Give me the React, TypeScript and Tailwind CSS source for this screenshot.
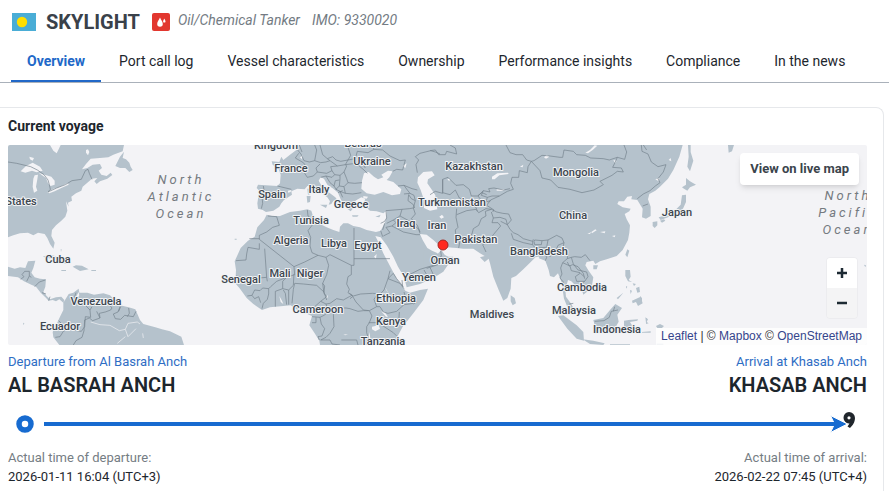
import React, { useState } from 'react';

type Label = { text: string; x: number; y: number };

const TABS = [
  'Overview',
  'Port call log',
  'Vessel characteristics',
  'Ownership',
  'Performance insights',
  'Compliance',
  'In the news',
];

const COUNTRIES: Label[] = [
  { text: 'States', x: 13, y: 60 },
  { text: 'Cuba', x: 50, y: 118 },
  { text: 'Venezuela', x: 88, y: 160 },
  { text: 'Ecuador', x: 52, y: 185 },
  { text: 'Kingdom', x: 268, y: 4 },
  { text: 'Belarus', x: 355, y: 2 },
  { text: 'Ukraine', x: 364, y: 20 },
  { text: 'France', x: 283, y: 27 },
  { text: 'Spain', x: 264, y: 53 },
  { text: 'Italy', x: 311, y: 48 },
  { text: 'Greece', x: 343, y: 63 },
  { text: 'Tunisia', x: 303, y: 79 },
  { text: 'Algeria', x: 283, y: 99 },
  { text: 'Libya', x: 326, y: 102 },
  { text: 'Egypt', x: 360, y: 104 },
  { text: 'Iraq', x: 398, y: 82 },
  { text: 'Iran', x: 429, y: 84 },
  { text: 'Mali', x: 272, y: 132 },
  { text: 'Niger', x: 302, y: 132 },
  { text: 'Senegal', x: 233, y: 138 },
  { text: 'Yemen', x: 411, y: 136 },
  { text: 'Ethiopia', x: 388, y: 157 },
  { text: 'Cameroon', x: 310, y: 168 },
  { text: 'Kenya', x: 383, y: 180 },
  { text: 'Tanzania', x: 375, y: 200 },
  { text: 'Kazakhstan', x: 466, y: 25 },
  { text: 'Turkmenistan', x: 444, y: 61 },
  { text: 'Pakistan', x: 468, y: 98 },
  { text: 'Oman', x: 437, y: 119 },
  { text: 'Mongolia', x: 568, y: 31 },
  { text: 'China', x: 565, y: 74 },
  { text: 'Bangladesh', x: 531, y: 110 },
  { text: 'Cambodia', x: 574, y: 146 },
  { text: 'Malaysia', x: 566, y: 169 },
  { text: 'Maldives', x: 484, y: 173 },
  { text: 'Indonesia', x: 609, y: 188 },
  { text: 'Japan', x: 669, y: 71 },
];

const OCEANS: Label[] = [
  { text: 'North', x: 173, y: 39 },
  { text: 'Atlantic', x: 173, y: 56 },
  { text: 'Ocean', x: 173, y: 73 },
  { text: 'North', x: 840, y: 55 },
  { text: 'Pacific', x: 840, y: 72 },
  { text: 'Ocean', x: 840, y: 89 },
];

const AMERICAS_LAND =
  'M24 15H372L368 34 340 44 325 52 300 54 272 56 258 72 246 88 262 84 278 74 300 72 306 84 296 92 304 104 320 108 332 98 337 105 322 116 300 124 290 132 283 124 292 114 276 116 262 128 248 140 244 152 228 160 214 170 216 182 204 188 206 200 198 184 202 212 196 230 184 242 168 256 156 270 154 288 164 308 160 326 150 312 142 294 134 282 114 278 100 286 84 278 60 280 40 286 24 292ZM372 35 360 50 346 78 360 84 376 84 388 96 398 90 392 80 388 68 378 58 368 54ZM24 380 44 386 60 382 76 384 84 364 106 362 100 384 94 398 104 412 120 416 138 418 136 440 130 456 140 468 150 478 168 472 184 470 193 480 190 488 178 478 168 484 158 480 146 482 136 472 122 458 108 440 94 434 72 424 54 412 24 408ZM190 488 206 462 220 458 236 446 238 458 262 458 282 464 310 460 330 466 346 482 360 496 386 502 406 508 420 540 430 552 466 562 486 568 510 574 544 590 552 615H178L160 592 158 576 166 560 180 530 190 510ZM128 350 150 344 180 352 212 368 198 372 170 360ZM218 380 228 376 246 377 266 388 240 393ZM184 390 198 390 198 393 184 393ZM274 390H288V393H274ZM182 328 185 328 183 336ZM69 548 73 550 71 556Z';

const WEST_LAND =
  'M232 15V28L210 44 190 60 184 50 178 66 155 64 158 74 176 88 182 104 180 130 172 138 114 134 110 144 118 152 112 190 114 206 128 210 138 216 160 212 178 200 184 190 192 180 216 164 214 154 232 146 254 148 262 138 278 136 292 150 308 162 322 172 330 184 326 194 334 192 340 182 352 180 346 172 322 154 304 136 296 122 302 112 312 116 322 134 340 146 354 158 362 178 370 192 382 206 392 214 400 204 396 190 410 180 424 172 436 176 432 188 438 202 450 212 470 214 490 220 500 212 500 232 494 250 482 272 468 276 440 270 420 262 400 258 384 250 370 250 360 260 358 276 340 270 320 262 300 252 284 250 270 244 280 232 274 212 262 208 240 212 210 216 180 228 156 228 140 224 132 240 112 262 104 290 84 302 62 324 44 364 48 390 46 430 60 446 80 474 100 492 126 510 150 502 190 498 212 496 236 512 262 522 276 528 268 556 284 580 298 602 300 615H530L532 590 548 560 580 520 610 480 624 446 600 450 570 458 556 452 548 440 530 416 510 378 490 340 478 312 466 288 482 292 500 316 520 350 534 380 552 410 560 442 600 432 640 414 670 395 700 350H664L650 338 636 332 622 324 608 300 600 282 620 284 640 300 660 318 700 322V15ZM110 15H180L174 24 150 28 120 30ZM204 152 214 150 212 156 204 158ZM262 146 270 146 272 162 264 164ZM260 168 272 168 270 186 262 188ZM300 194 322 194 318 204ZM396 226 416 226 412 230 398 230ZM466 230 482 224 478 232ZM44 296H50V299H44Z';

const EAST_LAND =
  'M-30 15H758L748 50 730 90 714 116 690 140 676 152 658 162 654 178 662 200 662 228 648 236 636 232 638 206 628 190 622 180 604 178 606 168 592 170 582 184 566 184 562 192 578 202 602 206 598 214 584 222 590 238 600 256 598 278 594 300 578 330 560 348 530 358 510 364 496 372 490 362 470 366 466 376 476 392 490 412 486 436 470 456 460 464 456 450 440 440 424 424 414 420 406 450 408 470 424 492 434 512 428 520 412 500 402 476 398 450 396 430 384 400 372 412 360 408 356 390 346 362 330 356 318 350 300 368 280 388 258 408 244 414 242 446 232 474 220 482 206 450 190 410 180 370 176 356 164 366 150 352 164 348 150 340 130 326 100 326 80 324 52 322 40 312 20 306 0 284-30 270ZM-20 330 0 338 20 345 34 330 44 344 64 356 52 376 36 390 10 400-20 410ZM242 466 254 474 258 490 248 496 242 484ZM592 328 598 332 592 352 586 344ZM490 376 504 376 500 388 490 388ZM586 390 600 390 602 410 596 420 606 426 594 424 586 408ZM608 430 618 432 612 438ZM600 450 606 452 602 462ZM618 444 628 440 630 456 622 458ZM606 482 632 470 638 490 624 498 618 486 608 490ZM588 438 592 440 588 446ZM560 474 580 458 564 478ZM490 540 520 534 540 510 556 492 576 504 562 524 566 545 552 570 520 572 494 556ZM384 528 400 526 440 556 460 576 462 602 440 596 412 566ZM458 598 490 602 524 610 520 615 480 612ZM582 542 596 540 624 538 622 542 600 546 606 556 596 580 588 570 582 560ZM540 612H600V614H540ZM646 532 652 536 648 548Z';

const FAR_EAST_LAND =
  'M144 15 152 15 152 36 160 62 150 94 142 80 146 50ZM138 114 150 124 168 134 150 142 142 152 132 146 126 142 138 134ZM126 166 138 164 138 186 130 204 124 212 100 224 84 232 62 240 56 232 90 222 104 212 122 194ZM38 246 52 244 52 256 44 264 38 258ZM60 242 72 238 76 242 66 248ZM264 15 282 15 276 34 266 38ZM0 468 6 474 6 490 0 486ZM18 534 24 538 20 546 26 550 18 552ZM48 558 60 552 72 558 66 564 52 564ZM6 576 32 574 32 578 6 578ZM672 374 678 376 676 382ZM50 614H70V611H50Z';

const AMERICAS_WATER =
  'M62 94 78 78 98 68 120 80 128 92 110 97 96 92 76 98ZM104 106 114 104 112 118 108 140 112 152 102 158 98 140 100 116ZM116 98 134 104 154 110 164 122 164 134 152 138 144 130 138 114 126 106ZM142 156 160 146 176 142 192 134 204 128 206 134 184 144 164 154 148 160ZM150 15H182L176 28 170 40 160 32ZM88 50 102 54 98 62 90 58ZM258 30 264 28 268 36 264 46 258 38ZM228 470 236 456 238 466 232 474Z';

const WEST_WATER =
  'M432 100 446 96 462 110 474 118 490 112 484 104 504 92 518 94 508 112 500 120 520 126 544 148 540 162 516 166 490 156 464 164 440 160 424 146 426 122ZM594 112 610 96 636 94 644 106 624 118 622 130 636 150 646 166 652 208 630 212 612 204 612 180 602 150 592 128ZM462 350 470 342 468 356ZM178 468 186 482 190 492 182 486ZM456 560 476 556 480 566 466 574 456 568ZM494 440 506 460 500 452ZM484 514 494 516 504 530 498 530ZM548 78 560 70 556 84ZM316 470 324 466 322 474ZM370 584 384 582 376 586ZM448 576 452 600 446 592ZM240 52 248 46 246 58ZM430 168 444 170 440 176 430 174Z';

const EAST_WATER =
  'M186 110 202 100 234 98 236 102 208 106 194 118 186 118ZM466 38 480 30 494 16 502 17 488 30 474 40ZM342 52 350 44 358 50 348 56ZM200 148 226 148 218 152 200 152ZM472 282 484 276 480 282ZM484 276 496 268 500 271 486 280ZM510 276 526 274 524 280ZM546 288 556 286 554 292ZM28 230 36 224 42 232 34 236ZM270 80 280 74 278 82ZM322 346 328 354 320 360ZM52 118 60 116 58 124ZM550 60 560 62 556 70ZM512 366 518 366 514 369ZM716 60 722 54 724 64ZM676 118 688 114 686 124Z';

const AMERICAS_BORDERS =
  'M24 66 50 70 92 80 112 90 132 104 144 120 148 134 151 148 144 156 170 144 196 134 216 122 244 118 256 92 264 88 268 100 276 118M62 418 72 410 66 404 74 394 88 394 88 408 94 412M88 408 80 424M136 420 118 426 104 440M126 458 138 462M150 470 146 482M228 458 222 476 230 490 256 496 270 510 272 532 256 530 254 560 244 574 220 570 206 562 190 556 176 542M166 592 180 590 190 574 206 566M220 615 228 602 246 592 252 572 254 540 268 534 278 542 300 534 298 520 316 516 332 510 336 504 328 494M270 510 276 500M300 534 290 514M360 500 354 516 340 522 346 536 362 538 374 526 400 530 408 514M386 504 388 520 382 530M362 500 356 514';

const WEST_BORDERS =
  'M230 26 244 44 252 62 268 66 284 62 290 30 284 15M236 40 226 54 250 68 262 84 250 90 254 100 262 112M238 15 246 36M300 15 308 44 322 56 330 62 318 66 302 68 284 62M322 56 338 50 348 60 362 64 384 60 392 46 384 22 372 15M330 62 352 78 376 74 384 60M262 112 280 108 292 96 288 84 300 72M292 96 320 100 336 92 332 80 352 78M336 92 344 104 336 112 318 108 302 112M344 104 360 106 372 96 380 78 376 74M372 96 380 116 384 128 372 140 358 138 360 116 360 106M318 108 330 128 342 138 350 150M342 138 346 122 358 120M358 138 348 148 360 154 368 172M372 140 376 160 398 162 412 160 424 158M384 128 404 130 426 128M376 74 408 70 432 90 442 100M408 70 428 72 436 84M360 154 376 160M354 158 368 152M384 60 406 56 412 34 444 38 462 28 488 30 510 48 540 62 556 60 548 90 530 88 518 94M130 138 132 150 126 168 128 190 124 206M172 138 214 148M144 228 170 230 178 256 158 262 140 276 118 286 118 298M118 296H88M118 298 222 380 254 366 294 346M118 310 118 328 84 322 80 342 78 360 48 362M262 210 264 228 274 236 276 256 264 272 272 292 270 318 276 338 294 346 318 352 330 344 394 376M402 264V376H394V404L384 410 380 432 388 448 384 458 396 466 388 470 370 480 350 476 330 490 318 492M402 356H510M134 326 140 412 92 416 64 412 48 408M140 412 142 424M222 380 224 404 200 412 170 424 152 440 146 446 128 444 120 452 104 450 96 466 82 468M318 352 326 376 320 404 308 430 314 438 312 456 290 436 250 432 224 430 220 448 216 490M222 402 220 436 206 450 188 446 188 424 200 412M206 450 206 494M190 450 196 460 200 494M188 446 166 454 166 500M146 446 146 462 142 478 130 490 126 506M96 466 104 476 116 470 122 488M308 430 312 460 320 470 302 484 284 500 276 520M312 456 320 480M302 484 318 492 324 510 340 520 350 506 360 504 378 504 390 506 414 514 430 512 446 512M388 460 400 468 422 462 458 460 482 462 474 470 492 450 504 416 510 392M396 466 408 486 430 510 448 512 470 500 480 500 490 516 504 520 530 514 552 494 580 490M470 500 462 478 470 466M504 416 520 400 530 416 550 440M504 416 540 430 552 446M552 456 556 470 590 486 580 492M538 516 536 548 530 560M448 512 456 528 448 548 440 560 440 578 446 598M446 548H474L520 578 532 590M276 530 300 532 312 526 320 520M276 548 288 548 288 532M300 532 304 552 314 566 306 588 294 590 298 600M340 520 342 560 330 580 318 592 302 600 330 600 336 612 360 615M364 600 410 600 414 615M498 212 546 208 568 206 580 204M498 212 500 234 494 244 482 250M500 250 520 240 540 228 546 208M520 240 528 248 516 258 498 262 510 278 490 288M540 228 570 244 596 268 600 280M516 258 550 276 588 284 600 284M482 272 488 290M494 250 488 270M580 204 586 222 574 236 592 256 600 276M534 138 552 136 576 146 592 150M552 162 570 160 582 166 586 182 574 176 566 164M552 136 562 150 570 160M566 164 564 182 580 194 584 204M586 182 580 204M592 98 588 74 596 60 586 50 600 40 632 32 646 36 660 42M548 440 546 420M612 390 620 404 632 412M600 388 640 376 664 370M560 408 600 388M398 470 390 476M462 28 456 15';

const EAST_BORDERS =
  'M0 32 16 30 26 44 46 44 50 34 80 42 76 24 60 15M228 15 240 38 258 44 278 44 290 60 304 64M304 64 312 62 336 46 360 48 390 52 398 52 402 30 430 34 440 44 466 46 482 54 520 56 538 60 562 52 584 58 590 36 582 15M304 64 330 92 336 114 362 120 384 142 420 148 456 158 492 150 520 134 510 124 546 106 562 94 580 96 574 84 548 82 556 66 562 52M304 64 294 80 292 98 268 92 266 112 246 112 242 130 250 148 232 154 208 168 182 180 170 196 192 210 188 216M38 158 38 118 54 112 78 136 100 134 118 148 124 168 142 168 156 158 170 164M38 118 38 160 16 154 0 164M38 158 60 164 76 150 88 174 118 186 138 202 142 214M118 186 140 186 150 176 144 168 160 152 180 156 176 146 192 144 220 150 240 146M160 152 154 166 172 172 186 168 208 168M172 172 168 186 182 182M80 206 78 232 84 262 76 270 78 292 90 302 86 324M80 224 110 212 138 208 146 218 168 206 184 208M78 292 110 296 126 282 130 266 146 256 154 236 168 228 166 214 184 208M184 208 200 216 218 220 236 222 244 240 232 254 240 268 250 278 264 284 280 296 308 304 310 298M184 216 190 234 186 248 204 248 212 258 200 272 190 284 176 304 158 314 168 336M190 234 210 232 228 238 232 254 212 244M244 280 250 298 280 308 308 314 308 304M312 304 314 300 336 302 334 314 314 314ZM336 302 354 300 380 286 396 294 402 308 384 316 376 336 366 342 360 350 352 330 342 336 350 352 346 362M308 316 318 324 350 322 354 300M320 326 322 350M402 308 398 328 414 342 412 356 424 352 434 350 454 352 466 344 480 362M412 356 398 368 392 384 396 402 390 414 400 426 402 450M412 366 418 378 428 374 444 380 460 400 464 416M424 352 430 372 444 390 470 396 474 410 464 424 440 424 436 410 450 400M398 368 420 378 424 392 450 398 462 410M464 424 450 434M418 492 430 490M494 544 522 542 538 532 544 514 564 510M554 500 550 514M622 176 640 162 660 152 676 138 690 128 684 116 700 96 708 74 684 80 664 66 654 42 636 34 634 15M638 198 654 192M-10 385 30 372 34 350M32 332 34 348 28 354M0 382 10 404M650 30 640 15';

const RIVERS =
  'M272 546 300 554 330 556 358 572 376 568 384 550 412 546 420 552M376 568 384 590 408 566M352 610 376 590M428 580 430 594';

const LandMap = () => (
  <svg viewBox="0 0 859 200" preserveAspectRatio="xMidYMid slice" className="block h-full w-full" role="img" aria-label="Voyage map">
    <g transform="translate(-8 -5) scale(0.33333)">
      <g fill="#b5c2cc">
        <path d={AMERICAS_LAND} />
        <path d={WEST_LAND} transform="translate(660 0)" />
        <path d={EAST_LAND} transform="translate(1290 0)" />
        <path d={FAR_EAST_LAND} transform="translate(1920 0)" />
      </g>
      <g fill="#f3f3f6">
        <path d={AMERICAS_WATER} />
        <path d={WEST_WATER} transform="translate(660 0)" />
        <path d={EAST_WATER} transform="translate(1290 0)" />
      </g>
      <path d={RIVERS} fill="none" stroke="#f3f3f6" strokeWidth="2" />
      <g fill="none" stroke="#73818b" strokeWidth="2" strokeLinejoin="round">
        <path d={AMERICAS_BORDERS} />
        <path d={WEST_BORDERS} transform="translate(660 0)" />
        <path d={EAST_BORDERS} transform="translate(1290 0)" />
      </g>
    </g>
    <g className="fill-[#3d464f] stroke-[#f1f3f5] stroke-2 text-[11px] font-medium" textAnchor="middle" paintOrder="stroke" strokeLinejoin="round">
      {COUNTRIES.map((label) => (
        <text key={label.text} x={label.x} y={label.y}>{label.text}</text>
      ))}
    </g>
    <g className="fill-[#757a80] text-[13px] tracking-[3px] italic" textAnchor="middle">
      {OCEANS.map((label) => (
        <text key={`${label.text}-${label.x}`} x={label.x} y={label.y}>{label.text}</text>
      ))}
    </g>
    <circle cx="435" cy="100" r="5" fill="#ff2a20" stroke="#a32622" />
  </svg>
);

const Flag = () => (
  <svg viewBox="0 0 24 18" className="h-[18px] w-6" role="img" aria-label="Palau">
    <path d="M0 0h24v18H0z" fill="#4aadd6" />
    <circle cx="10" cy="9" r="5.2" fill="#ffde00" />
  </svg>
);

const TankerIcon = () => (
  <svg viewBox="0 0 18 18" className="h-[18px] w-[18px]" aria-hidden="true">
    <rect width="18" height="18" rx="2" fill="#e2372f" />
    <path d="M8 4.5C7 7 5.2 8.5 5.2 11a2.8 2.8 0 0 0 5.6 0C10.8 8.5 9 7 8 4.5z" fill="#fff" />
    <path d="M12.300 5.500c-.4 1.200-1.200 1.800-1.200 2.900a1.200 1.200 0 0 0 2.400 0c0-1.100-.8-1.700-1.200-2.900z" fill="#fff" />
  </svg>
);

const RouteLine = () => (
  <div className="flex h-6 items-center pr-[11px] pl-2">
    <svg viewBox="0 0 18 18" className="h-[18px] w-[18px] shrink-0" aria-hidden="true">
      <circle cx="9" cy="9" r="6" fill="#fff" stroke="#176bd0" strokeWidth="5.5" />
    </svg>
    <div className="ml-2.5 h-1 flex-1 bg-[#176bd0]" />
    <svg viewBox="0 0 28 24" className="h-6 w-7 shrink-0" aria-hidden="true">
      <path
        fillRule="evenodd"
        d="M21 0a6 6 0 0 1 6 6c0 4.500-2.500 7.500-5 10l-2.500-1.500 2-3A5.700 5.700 0 1 1 21 0zm0 4.200a1.600 1.600 0 1 0 0 3.200 1.600 1.600 0 0 0 0-3.200z"
        fill="#20262c"
      />
      <path d="M2.500 3.500 19.500 12 2.500 20.500l4-8.500z" fill="#176bd0" stroke="#fff" strokeWidth="1" />
      <path d="M0 10h7v4H0z" fill="#176bd0" />
    </svg>
  </div>
);

const App: React.FC = () => {
  const [tab, setTab] = useState('Overview');

  return (
    <div className="min-h-screen overflow-hidden bg-white font-['Roboto',sans-serif] text-[#1d262d]">
      <header className="flex h-11 items-center pl-3">
        <Flag />
        <h1 className="ml-2.5 text-xl font-bold text-[#3a414a]">SKYLIGHT</h1>
        <div className="ml-3">
          <TankerIcon />
        </div>
        <p className="ml-2 flex gap-3 pb-1 text-sm text-[#737b83] italic">
          <span>Oil/Chemical Tanker</span>
          <span>IMO: 9330020</span>
        </p>
      </header>

      <nav className="flex gap-0.5 border-b border-[#aab1ba] pl-[11px] whitespace-nowrap">
        {TABS.map((name) => (
          <button
            key={name}
            onClick={() => setTab(name)}
            className={
              tab === name
                ? 'h-[38px] border-b-2 border-[#2168c8] px-4 pb-0.5 text-sm font-bold text-[#2168c8]'
                : 'h-[38px] border-b-2 border-transparent px-4 pb-0.5 text-sm'
            }
          >
            {name}
          </button>
        ))}
      </nav>

      <section className="mt-6 mr-[5px] rounded-tr-lg border-t border-r border-[#e6e8eb] pt-2 pr-4 pb-2 pl-2">
        <h2 className="text-sm leading-5 font-bold">Current voyage</h2>

        <div className="relative mt-[9px] h-[200px] overflow-hidden rounded-xs bg-[#f3f3f6]">
          <LandMap />
          <button className="absolute top-2 right-2 h-8 rounded bg-white px-2.5 text-[13px] font-bold text-[#3b444c] shadow-md">
            View on live map
          </button>
          <div className="absolute right-[9px] bottom-[26px] flex flex-col overflow-hidden rounded border border-[#ececef]">
            <button aria-label="Zoom in" className="flex h-[30px] w-[30px] items-center justify-center bg-white">
              <svg viewBox="0 0 10 10" className="h-2.5 w-2.5"><path d="M5 0v10M0 5h10" stroke="#1d2a33" strokeWidth="2.5" /></svg>
            </button>
            <button aria-label="Zoom out" className="flex h-[30px] w-[30px] items-center justify-center bg-[#f4f4f5]">
              <svg viewBox="0 0 10 10" className="h-2.5 w-2.5"><path d="M0 5h10" stroke="#1d2a33" strokeWidth="2.5" /></svg>
            </button>
          </div>
          <div className="absolute right-0 bottom-0 bg-white/80 px-[5px] font-['Liberation_Sans',sans-serif] text-xs leading-[17px] text-[#333]">
            <a href="#leaflet" className="text-[#35458c]">Leaflet</a> | © <a href="#mapbox" className="text-[#35458c]">Mapbox</a> ©{' '}
            <a href="#osm" className="text-[#35458c]">OpenStreetMap</a>
          </div>
        </div>

        <div className="mt-2 flex justify-between">
          <div>
            <a href="#departure" className="block text-[13px] leading-[18px] text-[#2e6dc4]">Departure from Al Basrah Anch</a>
            <h3 className="text-xl leading-7 font-semibold">AL BASRAH ANCH</h3>
          </div>
          <div className="text-right">
            <a href="#arrival" className="block text-[13px] leading-[18px] text-[#2e6dc4]">Arrival at Khasab Anch</a>
            <h3 className="text-xl leading-7 font-semibold">KHASAB ANCH</h3>
          </div>
        </div>

        <div className="mt-[13px]">
          <RouteLine />
        </div>

        <div className="mt-3 flex justify-between text-[13px] leading-[19px]">
          <div>
            <p className="text-[#757d84]">Actual time of departure:</p>
            <p>2026-01-11 16:04 (UTC+3)</p>
          </div>
          <div className="text-right">
            <p className="text-[#757d84]">Actual time of arrival:</p>
            <p>2026-02-22 07:45 (UTC+4)</p>
          </div>
        </div>
      </section>
    </div>
  );
};

export default App;
